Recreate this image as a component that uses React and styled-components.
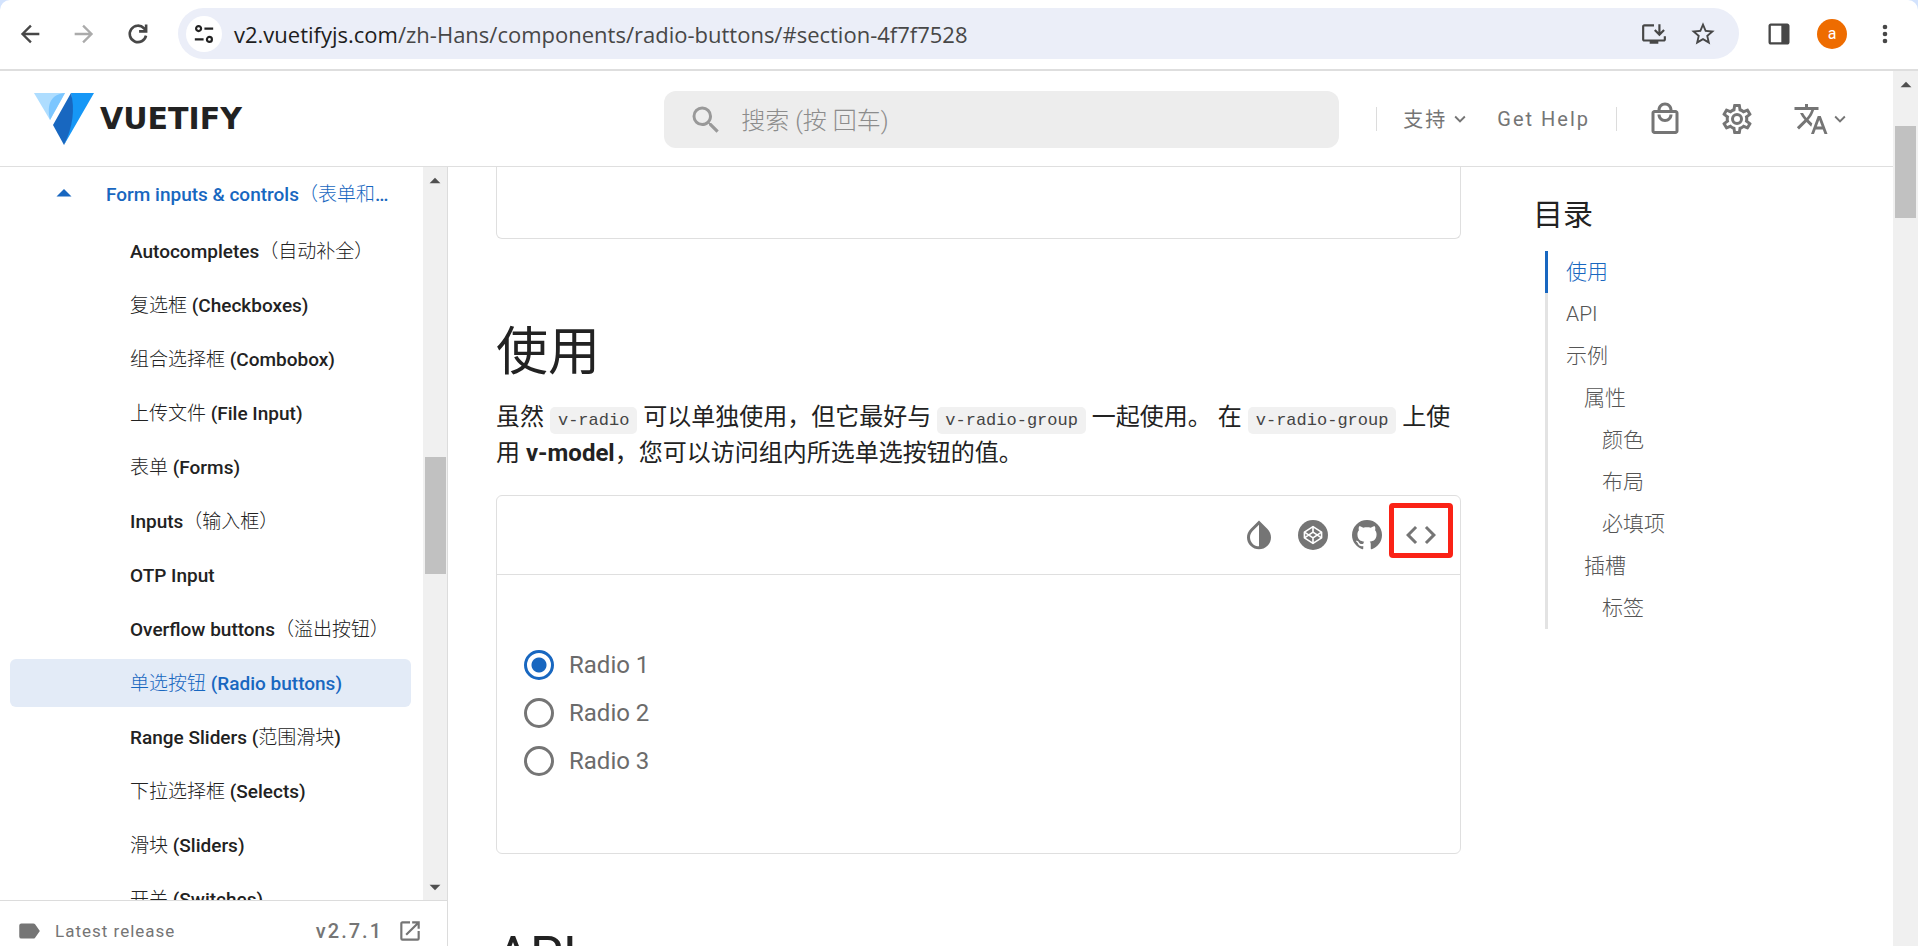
import styled, { createGlobalStyle } from "styled-components";

const GlobalStyle = createGlobalStyle`
  *, *::before, *::after {
    box-sizing: border-box;
  }
  body {
    margin: 0;
    background: #fff;
    color: #222;
    font-family: Roboto, "Noto Sans CJK SC", sans-serif;
  }
  a {
    color: inherit;
    text-decoration: none;
  }
  button {
    padding: 0;
    border: 0;
    background: none;
    color: inherit;
    font: inherit;
  }
`;

const PRIMARY = "#1867c0";
const GREY = "#757575";

const paths = {
  back: "M20,11V13H8L13.5,18.5L12.08,19.92L4.16,12L12.08,4.08L13.5,5.5L8,11H20Z",
  forward: "M4,11V13H16L10.5,18.5L11.92,19.92L19.84,12L11.92,4.08L10.5,5.5L16,11H4Z",
  star: "M12,15.39L8.24,17.66L9.23,13.38L5.91,10.5L10.29,10.13L12,6.09L13.71,10.13L18.09,10.5L14.77,13.38L15.76,17.66M22,9.24L14.81,8.63L12,2L9.19,8.63L2,9.24L7.45,13.97L5.82,21L12,17.27L18.18,21L16.54,13.97L22,9.24Z",
  dots: "M12,16A2,2 0 0,1 14,18A2,2 0 0,1 12,20A2,2 0 0,1 10,18A2,2 0 0,1 12,16M12,10A2,2 0 0,1 14,12A2,2 0 0,1 12,14A2,2 0 0,1 10,12A2,2 0 0,1 12,10M12,4A2,2 0 0,1 14,6A2,2 0 0,1 12,8A2,2 0 0,1 10,6A2,2 0 0,1 12,4Z",
  install: "M21,17H3V5H12V3H3C1.9,3 1,3.9 1,5V17C1,18.1 1.9,19 3,19H8V21H16V19H21C22.1,19 23,18.1 23,17V14H21V17M17,14L22,9L20.6,7.6L18,10.2V3H16V10.2L13.4,7.6L12,9L17,14Z",
  panel: "M5,3H19C20.1,3 21,3.9 21,5V19C21,20.1 20.1,21 19,21H5C3.9,21 3,20.1 3,19V5C3,3.9 3.9,3 5,3M5,5V19H14V5H5Z",
  magnify: "M9.5,3A6.5,6.5 0 0,1 16,9.5C16,11.11 15.41,12.59 14.44,13.73L14.71,14H15.5L20.5,19L19,20.5L14,15.5V14.71L13.73,14.44C12.59,15.41 11.11,16 9.5,16A6.5,6.5 0 0,1 3,9.5A6.5,6.5 0 0,1 9.5,3M9.5,5C7,5 5,7 5,9.5C5,12 7,14 9.5,14C12,14 14,12 14,9.5C14,7 12,5 9.5,5Z",
  shopping: "M19 6H17C17 3.2 14.8 1 12 1S7 3.2 7 6H5C3.9 6 3 6.9 3 8V20C3 21.1 3.9 22 5 22H19C20.1 22 21 21.1 21 20V8C21 6.9 20.1 6 19 6M12 3C13.7 3 15 4.3 15 6H9C9 4.3 10.3 3 12 3M19 20H5V8H19V20M12 12C10.3 12 9 10.7 9 9H7C7 11.8 9.2 14 12 14S17 11.8 17 9H15C15 10.7 13.7 12 12 12Z",
  cog: "M12,8A4,4 0 0,1 16,12A4,4 0 0,1 12,16A4,4 0 0,1 8,12A4,4 0 0,1 12,8M12,10A2,2 0 0,0 10,12A2,2 0 0,0 12,14A2,2 0 0,0 14,12A2,2 0 0,0 12,10M10,22C9.75,22 9.54,21.82 9.5,21.58L9.13,18.93C8.5,18.68 7.96,18.34 7.44,17.94L4.95,18.95C4.73,19.03 4.46,18.95 4.34,18.73L2.34,15.27C2.21,15.05 2.27,14.78 2.46,14.63L4.57,12.97L4.5,12L4.57,11L2.46,9.37C2.27,9.22 2.21,8.95 2.34,8.73L4.34,5.27C4.46,5.05 4.73,4.96 4.95,5.05L7.44,6.05C7.96,5.66 8.5,5.32 9.13,5.07L9.5,2.42C9.54,2.18 9.75,2 10,2H14C14.25,2 14.46,2.18 14.5,2.42L14.87,5.07C15.5,5.32 16.04,5.66 16.56,6.05L19.05,5.05C19.27,4.96 19.54,5.05 19.66,5.27L21.66,8.73C21.79,8.95 21.73,9.22 21.54,9.37L19.43,11L19.5,12L19.43,13L21.54,14.63C21.73,14.78 21.79,15.05 21.66,15.27L19.66,18.73C19.54,18.95 19.27,19.04 19.05,18.95L16.56,17.95C16.04,18.34 15.5,18.68 14.87,18.93L14.5,21.58C14.46,21.82 14.25,22 14,22H10M11.25,4L10.88,6.61C9.68,6.86 8.62,7.5 7.85,8.39L5.44,7.35L4.69,8.65L6.8,10.2C6.4,11.37 6.4,12.64 6.8,13.8L4.68,15.36L5.43,16.66L7.86,15.62C8.63,16.5 9.68,17.14 10.87,17.38L11.24,20H12.76L13.13,17.39C14.32,17.14 15.37,16.5 16.14,15.62L18.57,16.66L19.32,15.36L17.2,13.81C17.6,12.64 17.6,11.37 17.2,10.2L19.31,8.65L18.56,7.35L16.15,8.39C15.38,7.5 14.32,6.86 13.12,6.62L12.75,4H11.25Z",
  translate: "M12.87,15.07L10.33,12.56L10.36,12.53C12.1,10.59 13.34,8.36 14.07,6H17V4H10V2H8V4H1V6H12.17C11.5,7.92 10.44,9.75 9,11.35C8.07,10.32 7.3,9.19 6.69,8H4.69C5.42,9.63 6.42,11.17 7.67,12.56L2.58,17.58L4,19L9,14L12.11,17.11L12.87,15.07M18.5,10H16.5L12,22H14L15.12,19H19.87L21,22H23L18.5,10M15.88,17L17.5,12.67L19.12,17H15.88Z",
  chevron: "M7.41,8.58L12,13.17L16.59,8.58L18,10L12,16L6,10L7.41,8.58Z",
  invert: "M12,19.58V19.58C10.4,19.58 8.89,18.96 7.76,17.83C6.62,16.69 6,15.19 6,13.58C6,12 6.62,10.47 7.76,9.34L12,5.1M17.66,7.93L12,2.27V2.27L6.34,7.93C3.22,11.05 3.22,16.12 6.34,19.24C7.9,20.8 9.95,21.58 12,21.58C14.05,21.58 16.1,20.8 17.66,19.24C20.78,16.12 20.78,11.05 17.66,7.93Z",
  github: "M12,2A10,10 0 0,0 2,12C2,16.42 4.87,20.17 8.84,21.5C9.34,21.58 9.5,21.27 9.5,21C9.5,20.77 9.5,20.14 9.5,19.31C6.73,19.91 6.14,17.97 6.14,17.97C5.68,16.81 5.03,16.5 5.03,16.5C4.12,15.88 5.1,15.9 5.1,15.9C6.1,15.97 6.63,16.93 6.63,16.93C7.5,18.45 8.97,18 9.54,17.76C9.63,17.11 9.89,16.67 10.17,16.42C7.95,16.17 5.62,15.31 5.62,11.5C5.62,10.39 6,9.5 6.65,8.79C6.55,8.54 6.2,7.5 6.75,6.15C6.75,6.15 7.59,5.88 9.5,7.17C10.29,6.95 11.15,6.84 12,6.84C12.85,6.84 13.71,6.95 14.5,7.17C16.41,5.88 17.25,6.15 17.25,6.15C17.8,7.5 17.45,8.54 17.35,8.79C18,9.5 18.38,10.39 18.38,11.5C18.38,15.32 16.04,16.16 13.81,16.41C14.17,16.72 14.5,17.33 14.5,18.26C14.5,19.6 14.5,20.68 14.5,21C14.5,21.27 14.66,21.59 15.17,21.5C19.14,20.16 22,16.42 22,12A10,10 0 0,0 12,2Z",
  code: "M14.6,16.6L19.2,12L14.6,7.4L16,6L22,12L16,18L14.6,16.6M9.4,16.6L4.8,12L9.4,7.4L8,6L2,12L8,18L9.4,16.6Z",
  label: "M17.63,5.84C17.27,5.33 16.67,5 16,5H5A2,2 0 0,0 3,7V17A2,2 0 0,0 5,19H16C16.67,19 17.27,18.66 17.63,18.15L22,12L17.63,5.84Z",
  open: "M14,3V5H17.59L7.76,14.83L9.17,16.24L19,6.41V10H21V3M19,19H5V5H12V3H5C3.89,3 3,3.9 3,5V19A2,2 0 0,0 5,21H19A2,2 0 0,0 21,19V12H19V19Z",
  menuUp: "M7,15L12,10L17,15H7Z",
  menuDown: "M7,10L12,15L17,10H7Z",
};

const Svg = styled.svg`
  display: block;
  flex: none;
`;

const Icon = ({ name, size = 36 }) => (
  <Svg width={size} height={size} viewBox="0 0 24 24" fill="currentColor" fillRule="evenodd" aria-hidden="true">
    <path d={paths[name]} />
  </Svg>
);

const ReloadIcon = () => (
  <Svg width="26" height="26" viewBox="0 0 24 24" fill="none" stroke="currentColor" strokeWidth="2.4" aria-hidden="true">
    <path d="M19.4 13.5A7.6 7.6 0 1 1 17.5 6.7L19.5 8.8" />
    <path d="M19.5 3.2V9.6H13" />
  </Svg>
);

const TuneIcon = () => (
  <Svg width="20" height="20" viewBox="0 0 24 24" fill="none" stroke="currentColor" strokeWidth="2.6" aria-hidden="true">
    <circle cx="5.5" cy="5.5" r="3" />
    <path d="M12.5 5.5H23M1 18.5H11.5" />
    <circle cx="18.5" cy="18.5" r="3" />
  </Svg>
);

const CodepenIcon = () => (
  <Svg width="36" height="36" viewBox="0 0 24 24" aria-hidden="true">
    <circle cx="12" cy="12" r="10" fill="currentColor" />
    <g fill="none" stroke="#fff" strokeWidth="1.1" strokeLinejoin="round">
      <path d="M12 6.4L17.7 10.1V13.9L12 17.6L6.3 13.9V10.1Z" />
      <path d="M6.3 10.1L12 13.9L17.7 10.1M6.3 13.9L12 10.1L17.7 13.9M12 6.4V10.1M12 13.9V17.6" />
    </g>
  </Svg>
);

const LogoMark = () => (
  <Svg width="60" height="52" viewBox="0 0 60 52" aria-hidden="true">
    <path d="M0 0H31L16 27Z" fill="#aeddff" />
    <path d="M31 0L16 27C12 10 18 1 31 0Z" fill="#7bc6ff" />
    <path d="M37 0H60L30 52C39 30 39 14 37 0Z" fill="#1697f6" />
    <path d="M37 0L19 32L30 52C39 34 41 16 37 0Z" fill="#1867c0" />
  </Svg>
);

const Screen = styled.div`
  display: flex;
  flex-direction: column;
  height: 100vh;
  overflow: hidden;
  background: #d3e3fd;
`;

const BrowserBar = styled.header`
  display: flex;
  flex: none;
  align-items: center;
  height: 71px;
  padding: 0 19px 2px 14px;
  border-bottom: 2px solid #dedede;
  border-radius: 10px 10px 0 0;
  background: #fff;
  color: #474747;
`;

const BrowserButton = styled.button`
  display: grid;
  place-items: center;
  width: 32px;
  height: 32px;
  margin-right: 22px;
  color: ${props => (props.$muted ? "#ababab" : "inherit")};
`;

const AddressBar = styled.div`
  display: flex;
  flex: 1;
  align-items: center;
  height: 51px;
  margin: 0 26px 0 2px;
  padding: 0 22px 0 8px;
  border-radius: 26px;
  background: #ebeef8;
`;

const SiteInfo = styled.button`
  display: grid;
  place-items: center;
  width: 36px;
  height: 36px;
  margin-right: 12px;
  border-radius: 50%;
  background: #fff;
  color: #222;
`;

const Url = styled.div`
  flex: 1;
  font-family: "Open Sans", sans-serif;
  font-size: 22px;
  line-height: 28px;
  b {
    color: #1d1d1d;
    font-weight: 400;
  }
`;

const BarActions = styled.div`
  display: flex;
  align-items: center;
  gap: ${props => props.$gap}px;
`;

const Avatar = styled.button`
  width: 30px;
  height: 30px;
  border-radius: 50%;
  background: #ee6c00;
  color: #fff;
  font-size: 16px;
  line-height: 30px;
`;

const Viewport = styled.div`
  display: flex;
  flex: 1;
  min-height: 0;
  background: #fff;
`;

const Page = styled.div`
  display: flex;
  flex: 1;
  flex-direction: column;
  min-width: 0;
`;

const AppBar = styled.header`
  display: flex;
  flex: none;
  align-items: center;
  height: 96px;
  padding: 0 42px 0 34px;
  border-bottom: 1px solid #dfdfdf;
  color: ${GREY};
`;

const Brand = styled.a`
  display: flex;
  flex: 1;
  align-items: center;
  gap: 6px;
  color: #222;
  font-family: "DejaVu Sans", sans-serif;
  font-size: 30px;
  font-weight: 700;
  line-height: 52px;
`;

const Search = styled.label`
  display: flex;
  align-items: center;
  gap: 17px;
  width: 675px;
  height: 57px;
  margin-top: 2px;
  padding: 0 24px;
  border-radius: 12px;
  background: #ededed;
  color: #999;
  input {
    flex: 1;
    min-width: 0;
    padding: 2px 0 0;
    border: 0;
    outline: 0;
    background: none;
    font: 24px Roboto, "Noto Sans CJK SC", sans-serif;
    font-weight: 300;
  }
  input::placeholder {
    color: #8c8c8c;
    opacity: 1;
  }
`;

const HeaderNav = styled.nav`
  display: flex;
  align-items: center;
  margin-left: 37px;
`;

const Divider = styled.span`
  width: 1px;
  height: 24px;
  background: #dcdcdc;
`;

const NavLink = styled.a`
  display: flex;
  align-items: center;
  gap: 2px;
  margin: 0 26px 0 ${props => props.$start || 0}px;
  font-size: 20px;
  letter-spacing: 2px;
`;

const HeaderButton = styled.button`
  display: flex;
  align-items: center;
  margin-left: ${props => props.$start || 36}px;
`;

const Body = styled.div`
  display: flex;
  flex: 1;
  min-height: 0;
`;

const Sidebar = styled.aside`
  display: flex;
  flex: none;
  flex-direction: column;
  width: 448px;
  border-right: 1px solid #dcdcdc;
`;

const SidebarScroll = styled.div`
  display: flex;
  flex: 1;
  min-height: 0;
`;

const SideNav = styled.nav`
  flex: 1;
  min-width: 0;
  overflow: hidden;
  padding: 1px 12px 0 10px;
  font-size: 19px;
  font-weight: 500;
`;

const GroupLink = styled.a`
  display: flex;
  align-items: center;
  gap: 24px;
  height: 48px;
  margin-bottom: 11px;
  padding: 0 8px 0 36px;
  color: ${PRIMARY};
  span {
    overflow: hidden;
    text-overflow: ellipsis;
    white-space: nowrap;
  }
`;

const SideLink = styled.a`
  display: block;
  height: 48px;
  margin-bottom: 6px;
  padding-left: 120px;
  border-radius: 6px;
  background: ${props => (props.$active ? "#e3ebf7" : "none")};
  color: ${props => (props.$active ? PRIMARY : "#222")};
  line-height: 50px;
  white-space: nowrap;
`;

const Cjk = styled.span`
  font-weight: 300;
`;

const Release = styled.footer`
  display: flex;
  flex: none;
  align-items: center;
  height: 46px;
  padding: 14px 24px 0 16px;
  border-top: 1px solid #dcdcdc;
  color: ${GREY};
  font-size: 17px;
  letter-spacing: 1px;
  line-height: 24px;
`;

const ReleaseName = styled.span`
  flex: 1;
  padding-left: 13px;
`;

const Version = styled.a`
  display: flex;
  align-items: center;
  gap: 14px;
  font-size: 20px;
  font-weight: 500;
  letter-spacing: 2px;
`;

const Track = styled.div`
  display: flex;
  flex: none;
  flex-direction: column;
  align-items: center;
  width: ${props => props.$width}px;
  margin-bottom: -${props => props.$below || 0}px;
  background: #f0f0f0;
  color: #505050;
`;

const TrackArrow = styled.span`
  display: grid;
  place-items: center;
  height: 26px;
`;

const Gap = styled.span`
  flex: ${props => props.$grow} 0 0;
`;

const Thumb = styled.span`
  width: 21px;
  height: ${props => props.$length}px;
  background: #c1c1c1;
`;

const Main = styled.main`
  flex: 1;
  min-width: 0;
  overflow: hidden;
  padding: 0 48px;
`;

const PreviousExample = styled.div`
  height: 72px;
  margin-bottom: 78px;
  border: 1px solid #dfdfdf;
  border-top: 0;
  border-radius: 0 0 6px 6px;
`;

const Heading = styled.h1`
  margin: 66px 0 10px;
  font-size: 52px;
  font-weight: 400;
  line-height: 72px;
`;

const Copy = styled.p`
  margin: 0 0 24px;
  font-size: 24px;
  line-height: 36px;
  strong {
    font-weight: 700;
  }
`;

const Code = styled.code`
  padding: 4px 8px;
  border-radius: 5px;
  background: #f1f1f1;
  color: #444;
  font-family: "Liberation Mono", monospace;
  font-size: 17px;
  line-height: 20px;
`;

const Example = styled.section`
  border: 1px solid #dfdfdf;
  border-radius: 6px;
`;

const ExampleBar = styled.div`
  display: flex;
  align-items: center;
  justify-content: flex-end;
  gap: 18px;
  height: 79px;
  padding-right: 21px;
  border-bottom: 1px solid #dfdfdf;
  color: ${GREY};
`;

const ToolButton = styled.button`
  position: relative;
`;

const Marker = styled.span`
  position: absolute;
  inset: -14px -14px -5px -14px;
  border: 5px solid #fa2216;
  border-radius: 4px;
`;

const RadioGroup = styled.div`
  display: flex;
  flex-direction: column;
  gap: 18px;
  padding: 75px 27px 77px;
`;

const RadioLabel = styled.label`
  display: flex;
  align-items: center;
  gap: 15px;
  color: #6b6b6b;
  font-size: 24px;
  line-height: 30px;
  input {
    width: 30px;
    height: 30px;
    margin: 0;
    border: 3px solid ${GREY};
    border-radius: 50%;
    appearance: none;
  }
  input:checked {
    border-color: ${PRIMARY};
    background: radial-gradient(circle, ${PRIMARY} 7px, transparent 8px);
  }
`;

const Toc = styled.aside`
  flex: none;
  width: 384px;
  padding: 27px 0 0 24px;
`;

const TocTitle = styled.h2`
  margin: 0 0 15px;
  font-size: 30px;
  font-weight: 400;
  line-height: 42px;
`;

const TocList = styled.ul`
  margin: 0 0 0 12px;
  padding: 0;
  list-style: none;
`;

const TocItem = styled.li`
  padding-left: ${props => 18 + props.$level * 18}px;
  border-left: 3px solid ${props => (props.$active ? PRIMARY : "#e3e3e3")};
  color: ${props => (props.$active ? PRIMARY : "#555")};
  font-size: 21px;
  font-weight: 300;
  line-height: 42px;
`;

const links = [
  ["Autocompletes", "（自动补全）"],
  ["", "复选框", " (Checkboxes)"],
  ["", "组合选择框", " (Combobox)"],
  ["", "上传文件", " (File Input)"],
  ["", "表单", " (Forms)"],
  ["Inputs", "（输入框）"],
  ["OTP Input"],
  ["Overflow buttons", "（溢出按钮）"],
  ["", "单选按钮", " (Radio buttons)"],
  ["Range Sliders (", "范围滑块", ")"],
  ["", "下拉选择框", " (Selects)"],
  ["", "滑块", " (Sliders)"],
  ["", "开关", " (Switches)"],
];

const toc = [
  ["使用", 0],
  ["API", 0],
  ["示例", 0],
  ["属性", 1],
  ["颜色", 2],
  ["布局", 2],
  ["必填项", 2],
  ["插槽", 1],
  ["标签", 2],
];

const Scrollbar = ({ width, before, length, after, below }) => (
  <Track $width={width} $below={below} aria-hidden="true">
    <TrackArrow>
      <Icon name="menuUp" size={26} />
    </TrackArrow>
    <Gap $grow={before} />
    <Thumb $length={length} />
    <Gap $grow={after} />
    <TrackArrow>
      <Icon name="menuDown" size={26} />
    </TrackArrow>
  </Track>
);

const Browser = () => (
  <BrowserBar>
    <BrowserButton aria-label="Back">
      <Icon name="back" size={28} />
    </BrowserButton>
    <BrowserButton aria-label="Forward" $muted>
      <Icon name="forward" size={28} />
    </BrowserButton>
    <BrowserButton aria-label="Reload">
      <ReloadIcon />
    </BrowserButton>
    <AddressBar>
      <SiteInfo aria-label="Site information">
        <TuneIcon />
      </SiteInfo>
      <Url>
        <b>v2.vuetifyjs.com</b>/zh-Hans/components/radio-buttons/#section-4f7f7528
      </Url>
      <BarActions $gap={22}>
        <button aria-label="Install">
          <Icon name="install" size={26} />
        </button>
        <button aria-label="Bookmark">
          <Icon name="star" size={28} />
        </button>
      </BarActions>
    </AddressBar>
    <BarActions $gap={24}>
      <button aria-label="Side panel">
        <Icon name="panel" size={28} />
      </button>
      <Avatar>a</Avatar>
      <button aria-label="Menu">
        <Icon name="dots" size={28} />
      </button>
    </BarActions>
  </BrowserBar>
);

const Header = () => (
  <AppBar>
    <Brand href="#">
      <LogoMark />
      VUETIFY
    </Brand>
    <Search>
      <Icon name="magnify" />
      <input type="search" placeholder="搜索 (按 回车)" aria-label="搜索" />
    </Search>
    <HeaderNav>
      <Divider />
      <NavLink href="#" $start={26}>
        支持
        <Icon name="chevron" size={22} />
      </NavLink>
      <NavLink href="#">Get Help</NavLink>
      <Divider />
      <HeaderButton aria-label="Shop" $start={30}>
        <Icon name="shopping" />
      </HeaderButton>
      <HeaderButton aria-label="Settings">
        <Icon name="cog" />
      </HeaderButton>
      <HeaderButton aria-label="Language" $start={38}>
        <Icon name="translate" />
        <Icon name="chevron" size={22} />
      </HeaderButton>
    </HeaderNav>
  </AppBar>
);

const Navigation = () => (
  <Sidebar>
    <SidebarScroll>
      <SideNav>
        <GroupLink href="#">
          <Icon name="menuUp" />
          <span>
            Form inputs &amp; controls<Cjk>（表单和控件）</Cjk>
          </span>
        </GroupLink>
        {links.map(([before, cjk, after]) => (
          <SideLink key={before + cjk} href="#" $active={cjk === "单选按钮"}>
            {before}
            {cjk && <Cjk>{cjk}</Cjk>}
            {after}
          </SideLink>
        ))}
      </SideNav>
      <Scrollbar width={24} before={264} length={117} after={300} />
    </SidebarScroll>
    <Release>
      <Icon name="label" size={26} />
      <ReleaseName>Latest release</ReleaseName>
      <Version href="#">
        v2.7.1
        <Icon name="open" size={26} />
      </Version>
    </Release>
  </Sidebar>
);

const App = () => (
  <Screen>
    <GlobalStyle />
    <Browser />
    <Viewport>
      <Page>
        <Header />
        <Body>
          <Navigation />
          <Main>
            <PreviousExample />
            <Heading>使用</Heading>
            <Copy>
              虽然 <Code>v-radio</Code> 可以单独使用，但它最好与 <Code>v-radio-group</Code> 一起使用。 在{" "}
              <Code>v-radio-group</Code> 上使用 <strong>v-model</strong>，您可以访问组内所选单选按钮的值。
            </Copy>
            <Example>
              <ExampleBar>
                <ToolButton aria-label="Invert colors">
                  <Icon name="invert" />
                </ToolButton>
                <ToolButton aria-label="Edit in Codepen">
                  <CodepenIcon />
                </ToolButton>
                <ToolButton aria-label="View on GitHub">
                  <Icon name="github" />
                </ToolButton>
                <ToolButton aria-label="View source">
                  <Icon name="code" />
                  <Marker />
                </ToolButton>
              </ExampleBar>
              <RadioGroup>
                {[1, 2, 3].map(n => (
                  <RadioLabel key={n}>
                    <input type="radio" name="radio" defaultChecked={n === 1} />
                    Radio {n}
                  </RadioLabel>
                ))}
              </RadioGroup>
            </Example>
            <Heading>API</Heading>
          </Main>
          <Toc>
            <TocTitle>目录</TocTitle>
            <TocList>
              {toc.map(([text, level], index) => (
                <TocItem key={text} $level={level} $active={index === 0}>
                  <a href="#">{text}</a>
                </TocItem>
              ))}
            </TocList>
          </Toc>
        </Body>
      </Page>
      <Scrollbar width={25} before={29} length={92} after={718} below={16} />
    </Viewport>
  </Screen>
);

export default App;
